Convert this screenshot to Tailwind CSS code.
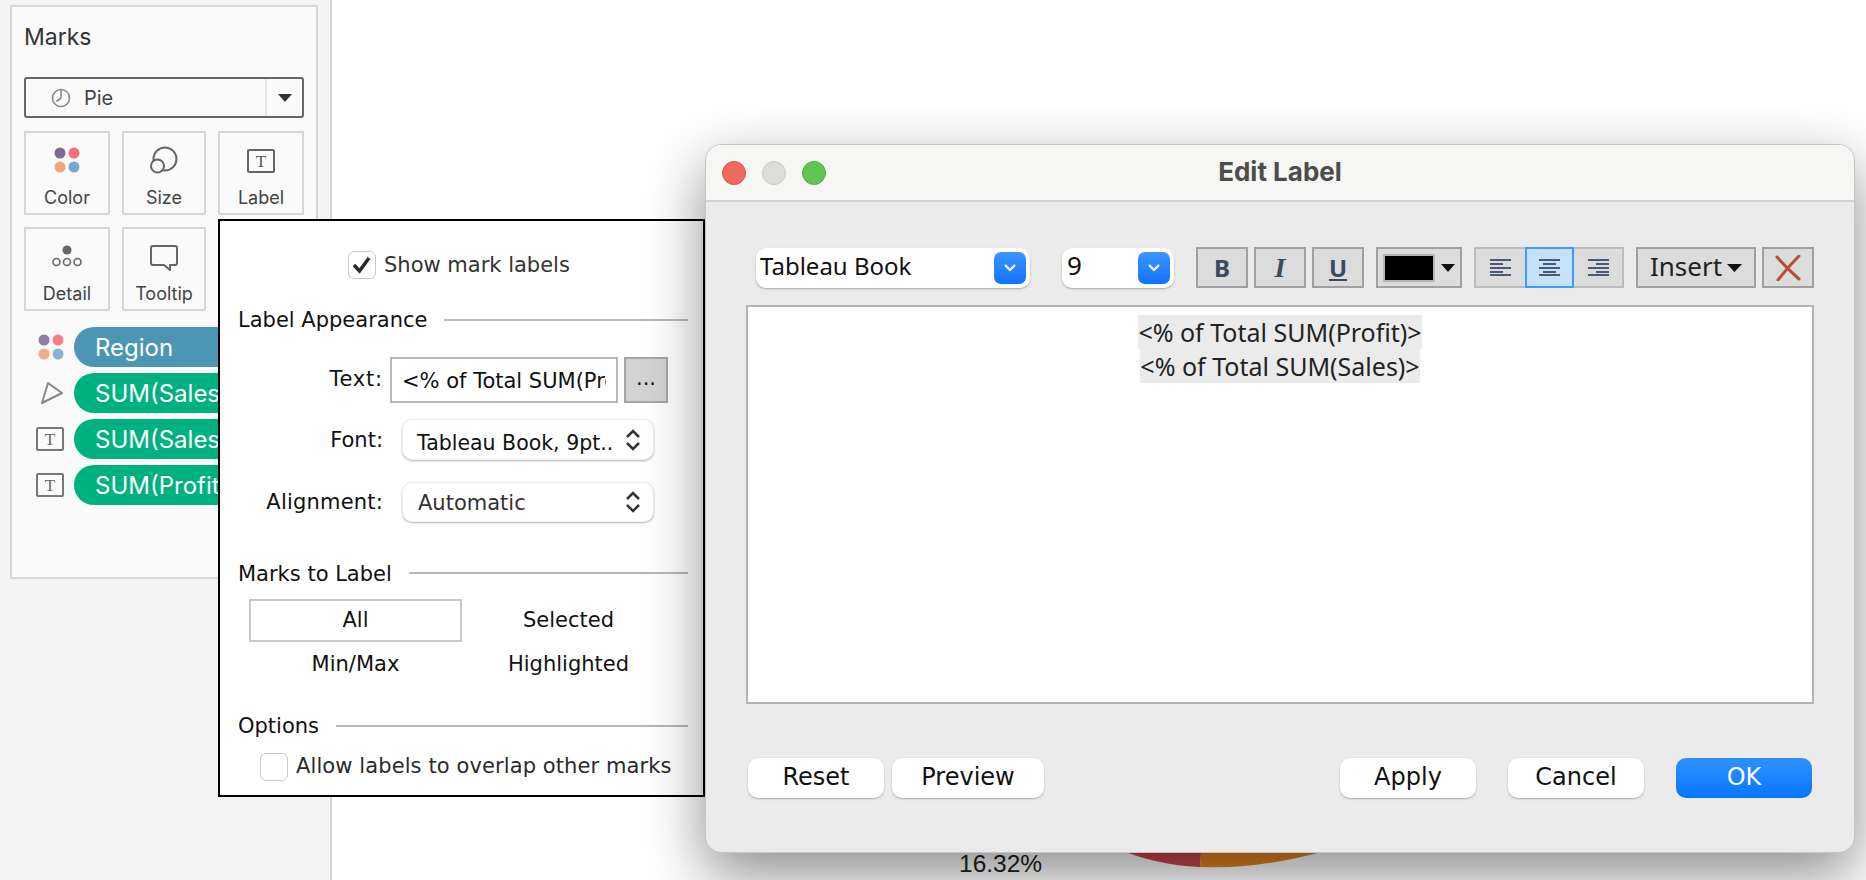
<!DOCTYPE html>
<html lang="en">
<head>
  <meta charset="UTF-8">
  <title>Edit Label</title>
  <script src="https://cdn.jsdelivr.net/npm/@tailwindcss/browser@4"></script>
</head>
<body class="bg-white">
<div class="relative w-[1866px] h-[880px] overflow-hidden bg-white font-['Inter',sans-serif]">

  <!-- Left sidebar -->
  <aside class="w-[332px] h-full bg-[#f4f4f4] border-r-2 border-[#d6d6d6] pt-[5px] pl-[10px]">
    <div class="w-[308px] h-[574px] border-2 border-[#d6d6d6] bg-[#fafafa] pl-[12px] overflow-hidden">
      <div class="h-[70px] pt-[15px] text-[23px] leading-[30px] text-[#333]">Marks</div>

      <!-- Mark type -->
      <div class="w-[280px] h-[41px] border-2 border-[#666] rounded-[3px] flex items-center">
        <svg class="ml-[25px]" width="20" height="20" viewBox="0 0 20 20" fill="none" stroke="#8a8a8a" stroke-width="1.6"><circle cx="10" cy="10" r="8.5"/><path d="M10 10V2M10 10l-4.500 3.500"/></svg>
        <span class="ml-[13px] text-[20px] text-[#444]">Pie</span>
        <div class="ml-auto w-[37px] h-full border-l-2 border-[#e4e4e4] flex items-center justify-center">
          <svg width="14" height="8" viewBox="0 0 14 8"><path d="M0 0h14L7 8z" fill="#333"/></svg>
        </div>
      </div>

      <!-- Shelf buttons -->
      <div class="grid grid-cols-[86px_84px_86px] gap-x-[12px] gap-y-[12px] mt-[13px] w-[280px]">
        <div class="h-[84px] border-2 border-[#d6d6d6] flex flex-col items-center">
          <svg class="mt-[14px]" width="26" height="26" viewBox="0 0 26 26"><circle cx="6" cy="6" r="5.500" fill="#7f6a96"/><circle cx="20" cy="6" r="5.500" fill="#f4707f"/><circle cx="6" cy="20" r="5.500" fill="#f2a47a"/><circle cx="20" cy="20" r="5.500" fill="#7ba6cf"/></svg>
          <span class="mt-[12px] text-[18px] leading-[26px] text-[#444]">Color</span>
        </div>
        <div class="h-[84px] border-2 border-[#d6d6d6] flex flex-col items-center">
          <svg class="mt-[13px]" width="30" height="30" viewBox="0 0 30 30" fill="none" stroke="#666" stroke-width="2"><circle cx="16" cy="13" r="11.500"/><circle cx="8.500" cy="20" r="6.500" fill="#fafafa"/></svg>
          <span class="mt-[9px] text-[18px] leading-[26px] text-[#444]">Size</span>
        </div>
        <div class="h-[84px] border-2 border-[#d6d6d6] flex flex-col items-center">
          <svg class="mt-[16px]" width="28" height="24" viewBox="0 0 28 24"><rect x="1" y="1" width="26" height="22" rx="1" fill="none" stroke="#666" stroke-width="2"/><text x="14" y="18" text-anchor="middle" font-family="Liberation Serif" font-size="17" fill="#555">T</text></svg>
          <span class="mt-[12px] text-[18px] leading-[26px] text-[#444]">Label</span>
        </div>
        <div class="h-[84px] border-2 border-[#d6d6d6] flex flex-col items-center">
          <svg class="mt-[16px]" width="32" height="24" viewBox="0 0 32 24" fill="none" stroke="#666" stroke-width="1.600"><circle cx="16" cy="5" r="4.500" fill="#666" stroke="none"/><circle cx="5.500" cy="17" r="3.500"/><circle cx="16" cy="17" r="3.500"/><circle cx="26.500" cy="17" r="3.500"/></svg>
          <span class="mt-[12px] text-[18px] leading-[26px] text-[#444]">Detail</span>
        </div>
        <div class="h-[84px] border-2 border-[#d6d6d6] flex flex-col items-center">
          <svg class="mt-[16px]" width="28" height="27" viewBox="0 0 28 27" fill="none" stroke="#666" stroke-width="2" stroke-linejoin="round"><path d="M3 1h22a2 2 0 0 1 2 2v15a2 2 0 0 1-2 2h-5v5l-6-5H3a2 2 0 0 1-2-2V3a2 2 0 0 1 2-2z"/></svg>
          <span class="mt-[9px] text-[18px] leading-[26px] text-[#444]">Tooltip</span>
        </div>
      </div>

      <!-- Encodings -->
      <div class="mt-[16px] flex flex-col gap-[6px] w-[292px]">
        <div class="h-[40px] flex items-center">
          <svg class="ml-[14px]" width="26" height="26" viewBox="0 0 26 26"><circle cx="6" cy="6" r="5.500" fill="#8f7ba3"/><circle cx="20" cy="6" r="5.500" fill="#f77f8c"/><circle cx="6" cy="20" r="5.500" fill="#f2ad87"/><circle cx="20" cy="20" r="5.500" fill="#8fb0d6"/></svg>
          <div class="ml-[10px] flex-1 h-full rounded-l-[20px] bg-[#4b96b4] pl-[21px] text-[24px] leading-[41px] text-white">Region</div>
        </div>
        <div class="h-[40px] flex items-center">
          <svg class="ml-[14px]" width="26" height="26" viewBox="0 0 26 26" fill="none" stroke="#888" stroke-width="2" stroke-linejoin="round"><path d="M4 23L10 3l14 10z"/></svg>
          <div class="ml-[10px] flex-1 h-full rounded-l-[20px] bg-[#00b180] pl-[21px] text-[24px] leading-[41px] text-white">SUM(Sales)</div>
        </div>
        <div class="h-[40px] flex items-center">
          <svg class="ml-[12px]" width="28" height="24" viewBox="0 0 28 24"><rect x="1" y="1" width="26" height="22" rx="1" fill="none" stroke="#777" stroke-width="2"/><text x="14" y="18" text-anchor="middle" font-family="Liberation Serif" font-size="17" fill="#666">T</text></svg>
          <div class="ml-[10px] flex-1 h-full rounded-l-[20px] bg-[#00b180] pl-[21px] text-[24px] leading-[41px] text-white">SUM(Sales)</div>
        </div>
        <div class="h-[40px] flex items-center">
          <svg class="ml-[12px]" width="28" height="24" viewBox="0 0 28 24"><rect x="1" y="1" width="26" height="22" rx="1" fill="none" stroke="#777" stroke-width="2"/><text x="14" y="18" text-anchor="middle" font-family="Liberation Serif" font-size="17" fill="#666">T</text></svg>
          <div class="ml-[10px] flex-1 h-full rounded-l-[20px] bg-[#00b180] pl-[21px] text-[24px] leading-[41px] text-white">SUM(Profit)</div>
        </div>
      </div>
    </div>
  </aside>

  <!-- Chart behind the dialog -->
  <svg class="absolute left-[1100px] top-[840px]" width="260" height="40" viewBox="0 0 260 40">
    <path d="M0 0H102L100 27C60 25 30 16 0 0z" fill="#c9474c"/>
    <path d="M102 0H260C220 14 160 30 100 27z" fill="#e2821f"/>
  </svg>
  <div class="absolute left-[959px] top-[850px] font-['Liberation_Sans',sans-serif] text-[24.5px] leading-[28px] text-[#222]">16.32%</div>

  <!-- Label popup -->
  <div class="absolute left-[218px] top-[219px] w-[487px] h-[578px] border-2 border-black bg-white font-['DejaVu_Sans',sans-serif] text-[21px] text-[#111]">
    <div class="flex items-center h-[28px] mt-[30px] ml-[128px]">
      <div class="w-[28px] h-[28px] rounded-[6px] border border-[#c8c8c8] flex items-center justify-center">
        <svg width="20" height="18" viewBox="0 0 20 18" fill="none" stroke="#2b2b2b" stroke-width="3.500"><path d="M2 9l5.500 6L17 2"/></svg>
      </div>
      <span class="ml-[8px] pt-[2px] text-[#333]">Show mark labels</span>
    </div>

    <div class="flex items-center h-[28px] mt-[27px] ml-[18px] mr-[15px]">
      <span class="pt-[2px]">Label Appearance</span>
      <div class="flex-1 h-[2px] bg-[#b8b8b8] ml-[17px]"></div>
    </div>

    <div class="flex items-center mt-[23px] h-[46px]">
      <span class="w-[163px] text-right tracking-[0.8px]">Text:</span>
      <div class="ml-[7px] w-[228px] h-[46px] border-2 border-[#b8b8b8] bg-white overflow-hidden"><div class="mx-[10px] h-full overflow-hidden whitespace-nowrap leading-[44px]">&lt;% of Total SUM(Profit)&gt;</div></div>
      <div class="ml-[6px] w-[44px] h-[46px] border-2 border-[#a6a6a6] bg-[#d3d3d3] flex items-center justify-center pb-[2px]">...</div>
    </div>

    <div class="flex items-center mt-[16px] h-[41px]">
      <span class="w-[163px] pt-[3px] text-right">Font:</span>
      <div class="ml-[19px] w-[252px] h-[41px] rounded-[10px] bg-white border border-[#eee] shadow-[0_1px_2px_rgba(0,0,0,0.3)] pl-[14px] pr-[12px] flex items-center justify-between">
        <span class="mt-[8px] text-[20.5px]">Tableau Book, 9pt..</span>
        <svg width="16" height="24" viewBox="0 0 16 24" fill="none" stroke="#333" stroke-width="2.500"><path d="M2 9l6-6 6 6M2 15l6 6 6-6"/></svg>
      </div>
    </div>

    <div class="flex items-center mt-[22px] h-[40px]">
      <span class="w-[163px] pt-[2px] text-right tracking-[0.2px]">Alignment:</span>
      <div class="ml-[19px] w-[252px] h-[40px] rounded-[10px] bg-white border border-[#eee] shadow-[0_1px_2px_rgba(0,0,0,0.3)] pl-[15px] pr-[12px] flex items-center justify-between">
        <span class="mt-[3px] text-[#333]">Automatic</span>
        <svg width="16" height="24" viewBox="0 0 16 24" fill="none" stroke="#333" stroke-width="2.500"><path d="M2 9l6-6 6 6M2 15l6 6 6-6"/></svg>
      </div>
    </div>

    <div class="flex items-center h-[28px] mt-[37px] ml-[18px] mr-[15px]">
      <span class="pt-[3px]">Marks to Label</span>
      <div class="flex-1 h-[2px] bg-[#b8b8b8] ml-[17px]"></div>
    </div>

    <div class="grid grid-cols-[213px_213px] gap-y-[1px] ml-[29px] mt-[12px] text-center">
      <div class="h-[43px] leading-[39px] border-2 border-[#c8c8c8]">All</div>
      <div class="h-[43px] leading-[43px]">Selected</div>
      <div class="h-[43px] leading-[43px]">Min/Max</div>
      <div class="h-[43px] leading-[43px]">Highlighted</div>
    </div>

    <div class="flex items-center h-[28px] mt-[26px] ml-[18px] mr-[15px]">
      <span class="pt-[2px]">Options</span>
      <div class="flex-1 h-[2px] bg-[#b8b8b8] ml-[17px]"></div>
    </div>

    <div class="flex items-center h-[28px] mt-[13px] ml-[40px]">
      <div class="w-[28px] h-[28px] rounded-[6px] border border-[#c8c8c8]"></div>
      <span class="ml-[8px] text-[#2a2a2a] tracking-[0.1px]">Allow labels to overlap other marks</span>
    </div>
  </div>

  <!-- Edit Label dialog -->
  <div class="absolute left-[705px] top-[144px] w-[1150px] h-[709px] rounded-[16px] bg-[#ebebeb] border border-[#c4c4c4] shadow-[0_22px_60px_rgba(0,0,0,0.45)] overflow-hidden">
    <div class="relative h-[57px] bg-[#f6f6f4] border-b-2 border-[#d2d2d2] flex items-center justify-center">
      <div class="absolute left-[16px] top-[16px] flex gap-[16px]">
        <div class="w-[24px] h-[24px] rounded-full bg-[#ee6a5f] border border-[#d9574d]"></div>
        <div class="w-[24px] h-[24px] rounded-full bg-[#dcdcda] border border-[#c8c8c8]"></div>
        <div class="w-[24px] h-[24px] rounded-full bg-[#61c554] border border-[#52b045]"></div>
      </div>
      <span class="font-['Inter',sans-serif] font-bold text-[26px] leading-[32px] pb-[2px] text-[#4c4c4c]">Edit Label</span>
    </div>

    <!-- Toolbar -->
    <div class="flex items-center h-[41px] mt-[45px] ml-[50px] font-['Noto_Sans',sans-serif] text-[24px] text-[#111]">
      <div class="w-[274px] h-[40px] rounded-[10px] bg-white shadow-[0_1px_2px_rgba(0,0,0,0.3)] pl-[4px] pr-[4px] flex items-center justify-between">
        <span class="pb-[4px]">Tableau Book</span>
        <div class="w-[32px] h-[32px] rounded-[7px] bg-gradient-to-b from-[#3d95ff] to-[#0a74ff] flex items-center justify-center">
          <svg width="12" height="8" viewBox="0 0 12 8" fill="none" stroke="#fff" stroke-width="2.200"><path d="M1 1l5 5 5-5"/></svg>
        </div>
      </div>
      <div class="ml-[32px] w-[112px] h-[40px] rounded-[10px] bg-white shadow-[0_1px_2px_rgba(0,0,0,0.3)] pl-[5px] pr-[4px] flex items-center justify-between">
        <span class="pb-[4px] text-[26px]">9</span>
        <div class="w-[32px] h-[32px] rounded-[7px] bg-gradient-to-b from-[#3d95ff] to-[#0a74ff] flex items-center justify-center">
          <svg width="12" height="8" viewBox="0 0 12 8" fill="none" stroke="#fff" stroke-width="2.200"><path d="M1 1l5 5 5-5"/></svg>
        </div>
      </div>
      <div class="ml-[22px] w-[52px] h-[41px] border-2 border-[#a0a0a0] bg-[#dcdcdc] flex items-center justify-center font-bold text-[#3a4a60]">B</div>
      <div class="ml-[6px] w-[52px] h-[41px] border-2 border-[#a0a0a0] bg-[#dcdcdc] flex items-center justify-center font-['Liberation_Serif',serif] font-bold italic text-[28px] text-[#3a4a60]">I</div>
      <div class="ml-[6px] w-[52px] h-[41px] border-2 border-[#a0a0a0] bg-[#dcdcdc] flex items-center justify-center font-bold text-[#3a4a60] underline underline-offset-2">U</div>
      <div class="ml-[12px] w-[86px] h-[41px] border-2 border-[#a0a0a0] bg-[#dcdcdc] pl-[5px] flex items-center">
        <div class="w-[52px] h-[28px] bg-black border-2 border-[#b5b5b5]"></div>
        <svg class="ml-[6px]" width="14" height="8" viewBox="0 0 14 8"><path d="M0 0h14L7 8z" fill="#111"/></svg>
      </div>

      <!-- Alignment group -->
      <div class="ml-[12px] flex h-[41px]">
        <div class="w-[51px] border-2 border-r-0 border-[#bcbcbc] bg-[#dcdcdc] flex items-center justify-center">
          <svg width="21" height="17" viewBox="0 0 21 17" stroke="#4a5a75" stroke-width="2"><path d="M0 1h21M0 5h13M0 9h21M0 13h13M0 16h21"/></svg>
        </div>
        <div class="w-[49px] border-2 border-[#3f9bff] bg-[#c5e1fb] flex items-center justify-center">
          <svg width="21" height="17" viewBox="0 0 21 17" stroke="#4a5a75" stroke-width="2"><path d="M0 1h21M4 5h13M0 9h21M4 13h13M0 16h21"/></svg>
        </div>
        <div class="w-[50px] border-2 border-l-0 border-[#bcbcbc] bg-[#dcdcdc] flex items-center justify-center">
          <svg width="21" height="17" viewBox="0 0 21 17" stroke="#4a5a75" stroke-width="2"><path d="M0 1h21M8 5h13M0 9h21M8 13h13M0 16h21"/></svg>
        </div>
      </div>

      <div class="ml-[12px] w-[120px] h-[41px] border-2 border-[#a0a0a0] bg-[#dcdcdc] flex items-center justify-center gap-[5px] text-[#222] text-[26px]">
        <span class="pb-[2px]">Insert</span>
        <svg width="15" height="8" viewBox="0 0 15 8"><path d="M0 0h15L7.500 8z" fill="#111"/></svg>
      </div>
      <div class="ml-[6px] w-[52px] h-[41px] border-2 border-[#a0a0a0] bg-[#dcdcdc] flex items-center justify-center">
        <svg width="26" height="26" viewBox="0 0 26 26" fill="none" stroke="#b5532f" stroke-width="3" stroke-linecap="round"><path d="M2 2c6 7 14 15 22 22M24 1C16 9 9 17 3 25"/></svg>
      </div>
    </div>

    <!-- Editor -->
    <div class="mt-[17px] ml-[40px] w-[1068px] h-[399px] border-2 border-[#b3b3b3] bg-white pt-[8px] flex flex-col items-center text-[25px] leading-[34px] text-[#222] font-['Noto_Sans',sans-serif]">
      <span class="bg-[#ebebeb]">&lt;% of Total SUM(Profit)&gt;</span>
      <span class="bg-[#ebebeb]">&lt;% of Total SUM(Sales)&gt;</span>
    </div>

    <!-- Footer buttons -->
    <div class="flex h-[40px] mt-[54px] ml-[42px] font-['DejaVu_Sans',sans-serif] text-[24px] leading-[38px] text-[#111] text-center">
      <div class="w-[136px] rounded-[10px] bg-white shadow-[0_1px_2px_rgba(0,0,0,0.3)]">Reset</div>
      <div class="ml-[8px] w-[152px] rounded-[10px] bg-white shadow-[0_1px_2px_rgba(0,0,0,0.3)]">Preview</div>
      <div class="ml-[296px] w-[136px] rounded-[10px] bg-white shadow-[0_1px_2px_rgba(0,0,0,0.3)]">Apply</div>
      <div class="ml-[32px] w-[136px] rounded-[10px] bg-white shadow-[0_1px_2px_rgba(0,0,0,0.3)]">Cancel</div>
      <div class="ml-[32px] w-[136px] rounded-[10px] bg-gradient-to-b from-[#2d92ff] to-[#0675ff] text-white">OK</div>
    </div>
  </div>
</div>
</body>
</html>
